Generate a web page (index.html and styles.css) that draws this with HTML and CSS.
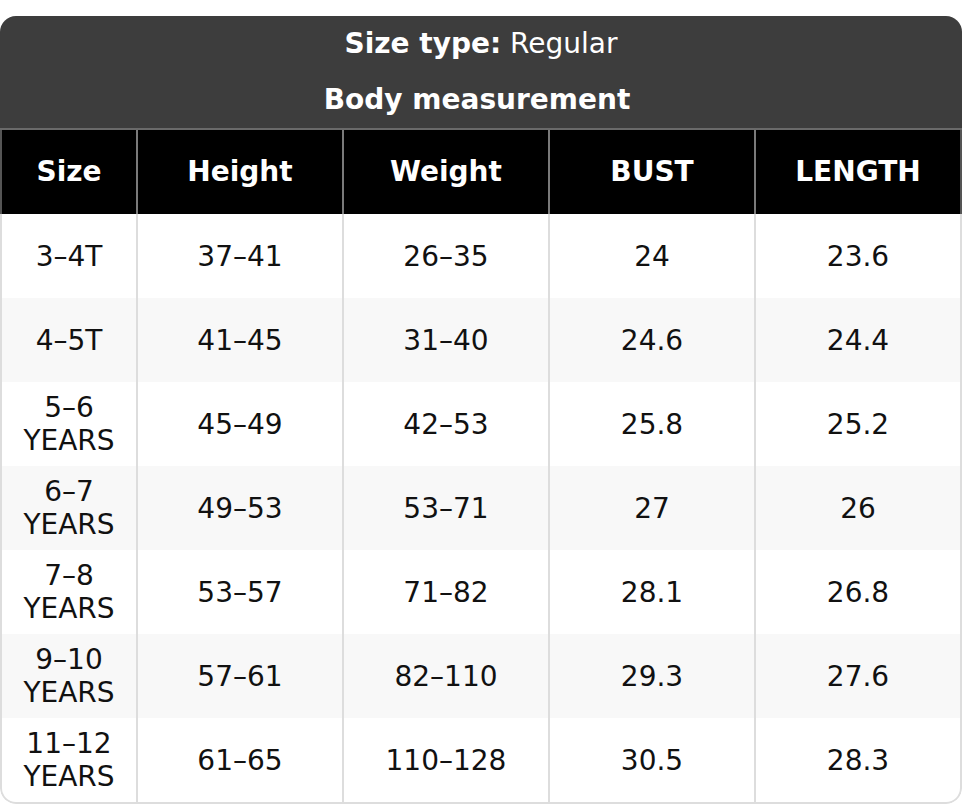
FILE: index.html
```html
<!DOCTYPE html>
<html lang="en">
<head>
<meta charset="utf-8">
<title>Size chart</title>
<link rel="stylesheet" href="styles.css">
</head>
<body>
<div class="chart">
  <table class="size-table">
    <colgroup>
      <col class="c-size"><col class="c-std"><col class="c-std"><col class="c-std"><col class="c-last">
    </colgroup>
    <thead>
      <tr class="title-row"><th colspan="5"><strong>Size type:</strong> <span class="light">Regular</span></th></tr>
      <tr class="title-row title-row--last"><th colspan="5"><strong>Body measurement</strong></th></tr>
      <tr class="col-heads">
        <th>Size</th><th>Height</th><th>Weight</th><th>BUST</th><th>LENGTH</th>
      </tr>
    </thead>
    <tbody>
      <tr><td>3–4T</td><td>37–41</td><td>26–35</td><td>24</td><td>23.6</td></tr>
      <tr><td>4–5T</td><td>41–45</td><td>31–40</td><td>24.6</td><td>24.4</td></tr>
      <tr><td>5–6<br>YEARS</td><td>45–49</td><td>42–53</td><td>25.8</td><td>25.2</td></tr>
      <tr><td>6–7<br>YEARS</td><td>49–53</td><td>53–71</td><td>27</td><td>26</td></tr>
      <tr><td>7–8<br>YEARS</td><td>53–57</td><td>71–82</td><td>28.1</td><td>26.8</td></tr>
      <tr><td>9–10<br>YEARS</td><td>57–61</td><td>82–110</td><td>29.3</td><td>27.6</td></tr>
      <tr><td>11–12<br>YEARS</td><td>61–65</td><td>110–128</td><td>30.5</td><td>28.3</td></tr>
    </tbody>
  </table>
</div>
</body>
</html>
```

FILE: styles.css
```css
html, body {
  margin: 0;
  padding: 0;
  background: #ffffff;
}

body {
  font-family: "DejaVu Sans", "Liberation Sans", sans-serif;
}

.chart {
  margin-top: 16px;
  width: 962px;
  border-radius: 16px;
  overflow: hidden;
}

.size-table {
  width: 962px;
  border-collapse: separate;
  border-spacing: 0;
  table-layout: fixed;
  font-size: 28px;
  line-height: 33px;
}

.c-size { width: 136px; }
.c-std { width: 206px; }
.c-last { width: 208px; }

.title-row th {
  height: 56px;
  padding: 0 0 1px;
  box-sizing: border-box;
  background: #3d3d3d;
  color: #ffffff;
  font-weight: normal;
  text-align: center;
  vertical-align: middle;
}

.title-row strong {
  font-weight: bold;
}

.title-row--last th {
  height: 58px;
  padding: 0 8px 1px 0;
  border-bottom: 2px solid #6a6a6a;
}

.col-heads th {
  height: 84px;
  padding: 0 0 2px;
  box-sizing: border-box;
  background: #000000;
  color: #ffffff;
  font-weight: bold;
  text-align: center;
  vertical-align: middle;
  border-left: 2px solid #7a7a7a;
}

.col-heads th:first-child {
  border-left-color: #555555;
}

.col-heads th:last-child {
  border-right: 2px solid #555555;
}

.size-table td {
  height: 84px;
  padding: 0;
  box-sizing: border-box;
  color: #111111;
  text-align: center;
  vertical-align: middle;
  border-left: 2px solid #dddddd;
  background: #ffffff;
}

.size-table td:last-child {
  border-right: 2px solid #dddddd;
}

.size-table tbody tr:nth-child(even) td {
  background: #f8f8f8;
}

.size-table tbody tr:last-child td {
  height: 86px;
  border-bottom: 2px solid #dddddd;
}

.size-table tbody tr:last-child td:first-child {
  border-bottom-left-radius: 16px;
}

.size-table tbody tr:last-child td:last-child {
  border-bottom-right-radius: 16px;
}
```
